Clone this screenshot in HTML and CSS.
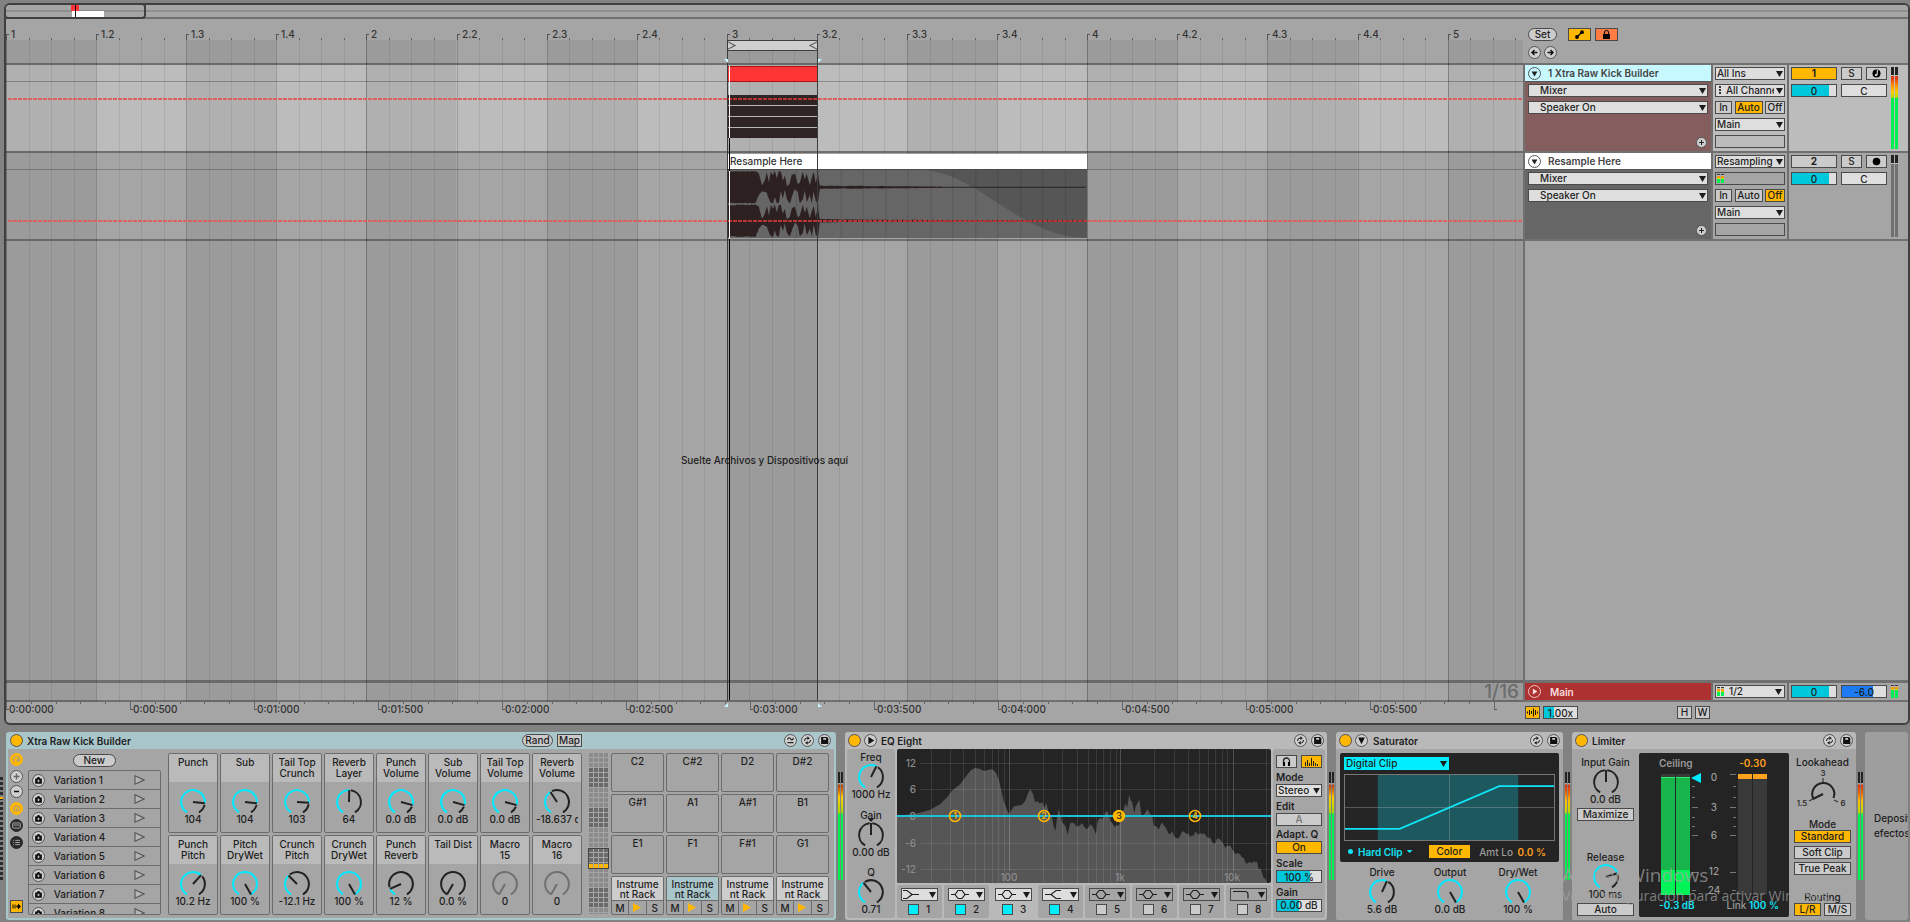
FILE: index.html
```html
<!DOCTYPE html>
<html lang="es">
<head>
<meta charset="utf-8">
<title>Xtra Raw Kick Builder</title>
<link rel="stylesheet" href="styles.css">
</head>
<body>
<svg class="defs" aria-hidden="true">
  <symbol id="i-swap" viewBox="0 0 13 13"><path d="M3 7.2C3 4.7 5 3.2 7 3.6M10 5.8C10 8.3 8 9.8 6 9.4" fill="none" stroke="#222" stroke-width="1.3"/><path d="M6.4 1.4L9.400 3.900 6.2 6zM6.6 11.600L3.600 9.100 6.8 7z" fill="#222"/></symbol>
  <symbol id="i-save" viewBox="0 0 13 13"><path d="M2.500 2.500h7l1.500 1.500v6.500H2.500z" fill="#111"/><path d="M5 3.4h3.4v2.2H5z" fill="#cfcfcf"/></symbol>
  <symbol id="i-wave" viewBox="0 0 13 13"><path d="M3 5.500C3.500 3 5.500 2.500 6.500 4.500S9.500 6 10 3.500" fill="none" stroke="#222" stroke-width="1.400"/><path d="M3 9h7" stroke="#222" stroke-width="1.400"/></symbol>
  <symbol id="i-cam" viewBox="0 0 13 13"><path d="M2.500 4h2.200L5.500 2.500h2L8.300 4h2.200v6.300h-8z" fill="#111"/><path d="M6.500 5.500v3M5 7h3" stroke="#ccc" stroke-width="1"/></symbol>
  <symbol id="i-tri" viewBox="0 0 13 13"><path d="M3 4h7L6.500 10z" fill="currentColor"/></symbol>
  <symbol id="i-bigtri" viewBox="0 0 13 13"><path d="M2.500 3h8L6.500 11z" fill="#111"/></symbol>
  <symbol id="i-play" viewBox="0 0 13 13"><path d="M4.500 3l5.500 3.500-5.500 3.500z" fill="currentColor"/></symbol>
  <symbol id="i-bigplay" viewBox="0 0 13 13"><path d="M4 2l7 4.500L4 11z" fill="#111"/></symbol>
  <symbol id="i-plus" viewBox="0 0 13 13"><path d="M6.500 3v7M3 6.500h7" stroke="currentColor" stroke-width="1.600"/></symbol>
  <symbol id="i-bell" viewBox="0 0 33 11"><path d="M1 5.500h4M15 5.500h4M5 5.500l3-4h4l3 4-3 4H8z" fill="none" stroke="currentColor" stroke-width="1.200"/></symbol>
  <symbol id="i-lowshelf" viewBox="0 0 33 11"><path d="M0 1.500h4l5 4h7M0 9.500h4l5-4" fill="none" stroke="currentColor" stroke-width="1.200"/></symbol>
  <symbol id="i-hishelf" viewBox="0 0 33 11"><path d="M1 5.500h6l5-4h5M7 5.500l5 4h5" fill="none" stroke="currentColor" stroke-width="1.200"/></symbol>
  <symbol id="i-cut" viewBox="0 0 33 11"><path d="M1 2.500h12q3 0 3 3v4" fill="none" stroke="currentColor" stroke-width="1.200"/></symbol>
</svg>

<main class="arrangement">
  <div class="overview">
    <span class="ov-red"></span><span class="ov-white"></span><span class="ov-box"></span><span class="ov-head"></span>
  </div>
  <div class="arr-body">
    <section class="timeline" id="timeline">
      <svg class="grid" id="grid" aria-hidden="true"></svg>
      <div class="ruler" id="ruler"></div>
      <div class="scrub"></div>
      <div class="lane lane-1"><span class="auto auto-1"></span></div>
      <div class="lane lane-2"><span class="auto auto-2"></span></div>
      <div class="lane lane-empty"><p>Suelte Archivos y Dispositivos aquí</p></div>
      <div class="lane lane-main"><span class="fixed-grid">1/16</span></div>
      <div class="time-ruler" id="timeRuler"></div>

      <div class="brace"><svg viewBox="0 0 90 11" preserveAspectRatio="none"><path d="M1 1l7 4.500-7 4.500M89 1l-7 4.500 7 4.500" fill="none" stroke="#555" stroke-width="1.200"/></svg></div>
      <div class="clip clip-midi">
        <div class="clip-bar"></div>
        <div class="notes"><i></i><i></i><i></i><i></i></div>
      </div>
      <div class="clip clip-audio">
        <div class="clip-name">Resample Here</div>
        <svg class="wave" id="wave" viewBox="0 0 360 69" preserveAspectRatio="none"></svg>
      </div>
      <span class="auto over-1"></span><span class="auto over-2"></span>
      <span class="vline v-start"></span><span class="vline v-end"></span><span class="vline v-play"></span>
      <span class="white-head w1"></span><span class="white-head w2"></span>
      <span class="mark m1"></span><span class="mark m2"></span><span class="mark m3"></span><span class="mark m4"></span>
    </section>

    <section class="mixer">
      <div class="mix-top">
        <div class="row"><button class="btn pill set">Set</button>
          <button class="btn on icon23" aria-label="Automation"><svg viewBox="0 0 21 11"><path d="M8 8l5-5" stroke="#111" stroke-width="1.500"/><circle cx="8" cy="8" r="1.900"/><circle cx="13" cy="3.200" r="1.900"/></svg></button>
          <button class="btn lock icon23" aria-label="Lock envelopes"><svg viewBox="0 0 21 11"><path d="M7 5h7v5H7z"/><path d="M8.500 5V3.500a2 2 0 0 1 4 0V5" fill="none" stroke="#111" stroke-width="1.200"/></svg></button></div>
        <div class="row arrows"><button class="round" aria-label="Previous"><svg viewBox="0 0 13 13"><path d="M3 6.500h7M6.500 3.500l-3 3 3 3" fill="none" stroke="#111" stroke-width="1.700"/></svg></button><button class="round" aria-label="Next"><svg viewBox="0 0 13 13"><path d="M3 6.500h7M6.500 3.500l3 3-3 3" fill="none" stroke="#111" stroke-width="1.700"/></svg></button></div>
      </div>
      <div class="track t1">
        <div class="head">
          <div class="name"><button class="round clear" aria-label="Fold"><svg><use href="#i-tri"/></svg></button><span>1 Xtra Raw Kick Builder</span></div>
          <label class="sel wide"><select aria-label="Device"><option>Mixer</option></select></label>
          <label class="sel wide"><select aria-label="Parameter"><option>Speaker On</option></select></label>
          <button class="round small add" aria-label="Add lane"><svg><use href="#i-plus"/></svg></button>
        </div>
        <div class="io">
          <label class="sel"><select aria-label="Input"><option>All Ins</option></select></label>
          <label class="sel chan"><select aria-label="Channel"><option>All Channels</option></select></label>
          <div class="mon"><button class="btn">In</button><button class="btn on">Auto</button><button class="btn">Off</button></div>
          <label class="sel"><select aria-label="Output"><option>Main</option></select></label>
          <span class="blank"></span>
        </div>
        <div class="mix">
          <div class="ctl"><button class="btn on strong">1</button><button class="btn">S</button><button class="btn" aria-label="Arm"><svg viewBox="0 0 13 11"><circle cx="6.500" cy="5.500" r="4"/><path d="M7.500 2l-.5 5.500" stroke="#ccc" stroke-width="1.200"/><circle cx="6" cy="7" r="1.200" fill="#ccc"/></svg></button>
            <input class="num" style="--fill:84%" value="0" aria-label="Volume"><input class="num pan" value="C" aria-label="Pan"></div>
          <div class="meter"><i></i><i></i></div>
        </div>
      </div>
      <div class="track t2">
        <div class="head">
          <div class="name"><button class="round clear" aria-label="Fold"><svg><use href="#i-tri"/></svg></button><span>Resample Here</span></div>
          <label class="sel wide"><select aria-label="Device"><option>Mixer</option></select></label>
          <label class="sel wide"><select aria-label="Parameter"><option>Speaker On</option></select></label>
          <button class="round small add" aria-label="Add lane"><svg><use href="#i-plus"/></svg></button>
        </div>
        <div class="io">
          <label class="sel"><select aria-label="Input"><option>Resampling</option></select></label>
          <span class="blank"><b class="mini"></b><b class="mini"></b></span>
          <div class="mon"><button class="btn">In</button><button class="btn">Auto</button><button class="btn on">Off</button></div>
          <label class="sel"><select aria-label="Output"><option>Main</option></select></label>
          <span class="blank"></span>
        </div>
        <div class="mix">
          <div class="ctl"><button class="btn strong">2</button><button class="btn">S</button><button class="btn" aria-label="Arm"><svg viewBox="0 0 13 11"><circle cx="6.500" cy="5.500" r="3.800"/></svg></button>
            <input class="num" style="--fill:84%" value="0" aria-label="Volume"><input class="num pan" value="C" aria-label="Pan"></div>
          <div class="meter idle"><i></i><i></i></div>
        </div>
      </div>
      <div class="mix-space"></div>
      <div class="main-track">
        <div class="head"><button class="round ghost" aria-label="Main"><svg><use href="#i-play"/></svg></button><span>Main</span></div>
        <div class="io"><label class="sel out"><b class="mini"></b><b class="mini"></b><select aria-label="Output"><option>1/2</option></select></label></div>
        <div class="mix"><div class="ctl"><input class="num" style="--fill:84%" value="0" aria-label="Volume"><input class="num cue" style="--fill:70%" value="-6.0" aria-label="Cue"></div><div class="tiny"><b class="mini"></b><b class="mini"></b></div></div>
      </div>
      <div class="mix-foot">
        <button class="btn on sq" aria-label="Warp"><svg viewBox="0 0 13 11"><path d="M1.500 4.500v2M3.500 3v5M5.500 4v3M7.500 1.500v8M9.500 3v5M11.500 4.500v2" stroke="#111"/></svg></button>
        <input class="num zoom" style="--fill:30%" value="1.00x" aria-label="Zoom">
        <button class="btn sq push">H</button><button class="btn sq">W</button>
      </div>
    </section>
  </div>
</main>

<section class="devices">
  <span class="chain-dots"></span>

  <article class="device rack">
    <header><button class="round power" aria-label="On"></button><h2>Xtra Raw Kick Builder</h2>
      <div class="rackbtns"><button class="btn pill">Rand</button><button class="btn">Map</button></div>
      <span class="tools"><button class="round" aria-label="Variations"><svg><use href="#i-wave"/></svg></button><button class="round" aria-label="Swap"><svg><use href="#i-swap"/></svg></button><button class="round" aria-label="Save"><svg><use href="#i-save"/></svg></button></span></header>
    <div class="body">
      <nav class="side">
        <button class="round dot-y" aria-label="Macros"><svg viewBox="0 0 13 13"><path d="M4 9.500a4 4 0 1 1 5 0M6.500 6.500a1.500 1.500 0 1 1 0 1" fill="none" stroke="#b5a070" stroke-width="1.400"/></svg></button>
        <button class="round g1" aria-label="Add"><svg class="dim"><use href="#i-plus"/></svg></button>
        <button class="round g2" aria-label="Remove"><svg viewBox="0 0 13 13"><path d="M3.500 6.500h6" stroke="#111" stroke-width="1.600"/></svg></button>
        <button class="round dot-y" aria-label="Snapshots"><svg viewBox="0 0 13 13"><path d="M3 4.500h2l.7-1.300h1.600L8 4.500h2v5H3zM6.500 5.500v3M5 7h3" fill="none" stroke="#b5a070" stroke-width="1.200"/></svg></button>
        <button class="round dot-k" aria-label="Devices"><svg viewBox="0 0 13 13"><rect x="2" y="3.500" width="9" height="6" rx="1" fill="none" stroke="#bbb"/><path d="M3 6h7" stroke="#bbb"/></svg></button>
        <button class="round dot-k" aria-label="Chains"><svg viewBox="0 0 13 13"><path d="M5 4h5.500M5 6.500h5.500M5 9h5.500M2.500 4h1M2.500 6.500h1M2.500 9h1" stroke="#bbb"/></svg></button>
        <button class="btn on sq last" aria-label="Hot swap"><svg viewBox="0 0 11 11"><path d="M2 3.500v4M4 3.500v4" stroke="#111"/><path d="M5.500 4.500H7V2.500l3 3-3 3v-2H5.500z"/></svg></button>
      </nav>
      <div class="vars"><button class="btn pill new">New</button><ul id="vars"></ul></div>
      <div class="macros" id="macros"></div>
      <div class="padmap"><i></i></div>
      <div class="pads" id="pads"></div>
    </div>
  </article>
  <div class="chain-meter"><i></i><i></i></div>

  <article class="device eq">
    <header><button class="round power" aria-label="On"></button><button class="round" aria-label="Expand"><svg><use href="#i-bigplay"/></svg></button><h2>EQ Eight</h2>
      <span class="tools"><button class="round" aria-label="Swap"><svg><use href="#i-swap"/></svg></button><button class="round" aria-label="Save"><svg><use href="#i-save"/></svg></button></span></header>
    <div class="body">
      <div class="panel eqk">
        <div class="kg" data-label="Freq" data-v="0.59" data-val="1000 Hz"></div>
        <div class="kg" data-label="Gain" data-v="0.5" data-kind="bip" data-val="0.00 dB"></div>
        <div class="kg" data-label="Q" data-v="0.37" data-val="0.71"></div>
      </div>
      <div class="eqc">
        <svg class="eqgraph" id="eqgraph" viewBox="0 0 374 134"></svg>
        <div class="bands" id="bands"></div>
      </div>
      <div class="panel eqr">
        <div class="pair"><button class="btn" aria-label="Audition"><svg viewBox="0 0 19 11"><path d="M6.500 8.500V5a3 3 0 0 1 6 0v3.500" fill="none" stroke="#222" stroke-width="1.300"/><path d="M6 6h2v4H6zM11 6h2v4h-2z"/></svg></button><button class="btn on" aria-label="Analyze"><svg viewBox="0 0 19 11"><path d="M3.500 6v4M5.500 4v6M7.500 7v3M9.500 2v8M11.500 5v5M13.500 7v3M15.500 8v2" stroke="#222"/></svg></button></div>
        <label><span>Mode</span><span class="sel"><select><option>Stereo</option></select></span></label>
        <div class="f"><span>Edit</span><button class="btn dimt">A</button></div>
        <div class="f"><span>Adapt. Q</span><button class="btn on">On</button></div>
        <label><span>Scale</span><input class="num" style="--fill:74%" value="100 %"></label>
        <label><span>Gain</span><input class="num" style="--fill:50%" value="0.00 dB"></label>
      </div>
    </div>
  </article>
  <div class="chain-meter"><i></i><i></i></div>

  <article class="device sat">
    <header><button class="round power" aria-label="On"></button><button class="round" aria-label="Fold"><svg><use href="#i-bigtri"/></svg></button><h2>Saturator</h2>
      <span class="tools"><button class="round" aria-label="Swap"><svg><use href="#i-swap"/></svg></button><button class="round" aria-label="Save"><svg><use href="#i-save"/></svg></button></span></header>
    <div class="body">
      <div class="dark">
        <label class="sel cy"><select aria-label="Curve"><option>Digital Clip</option></select></label>
        <svg class="shaper" viewBox="0 0 210 67" preserveAspectRatio="none"><rect x="33" width="141" height="67" fill="#1c585e"/><path d="M105 0v67M0 33.500h210" stroke="#9aa" stroke-opacity=".4"/><path d="M0 55.500h55L155 11.500h55" fill="none" stroke="#10e4f6" stroke-width="1.800"/></svg>
        <div class="satrow"><span class="hard"><i></i>Hard Clip<small></small></span><button class="color">Color</button><span class="amt">Amt Lo <b>0.0 %</b></span></div>
      </div>
      <div class="satk"><div class="kg" data-label="Drive" data-v="0.58" data-val="5.6 dB"></div><div class="kg" data-label="Output" data-v="1" data-val="0.0 dB"></div><div class="kg" data-label="Dry/Wet" data-v="1" data-val="100 %"></div></div>
    </div>
  </article>
  <div class="chain-meter full"><i></i><i></i></div>

  <article class="device lim">
    <header><button class="round power" aria-label="On"></button><h2>Limiter</h2>
      <span class="tools"><button class="round" aria-label="Swap"><svg><use href="#i-swap"/></svg></button><button class="round" aria-label="Save"><svg><use href="#i-save"/></svg></button></span></header>
    <div class="body">
      <div class="liml"><div class="kg" data-label="Input Gain" data-v="0.5" data-kind="plain" data-val="0.0 dB"></div><button class="btn">Maximize</button>
        <div class="kg rel" data-label="Release" data-v="0.74" data-val="100 ms"></div><button class="btn">Auto</button></div>
      <div class="dark limd">
        <div class="limt"><span>Ceiling</span><b>-0.30</b></div>
        <svg class="limg" id="limg" viewBox="0 0 150 122"></svg>
        <div class="limb"><b>-0.3 dB</b><span>Link <b>100 %</b></span></div>
      </div>
      <div class="limr">
        <span>Lookahead</span>
        <svg class="look" viewBox="0 0 54 42"><text x="27" y="8">3</text><text x="6" y="38">1.5</text><text x="47" y="38">6</text><path d="M27 10v4M13 33l4-2M38 32l4 2" stroke="#333" stroke-width="1.200"/><path d="M17.500 31A11 11 0 1 1 37.500 30M27 26l-10 5" fill="none" stroke="#222" stroke-width="2"/></svg>
        <span class="gapt">Mode</span><button class="btn on">Standard</button><button class="btn">Soft Clip</button><button class="btn">True Peak</button>
        <span class="push">Routing</span><div class="pair"><button class="btn on">L/R</button><button class="btn">M/S</button></div>
      </div>
    </div>
  </article>
  <div class="chain-meter full"><i></i><i></i></div>
  <div class="drop">Depositar efectos</div>
  <p class="notice"><span>Activar Windows</span>Ve a Configuración para activar Windows.</p>
</section>
<script src="app.js"></script>
</body>
</html>
```
FILE: styles.css
```css
* { box-sizing: border-box; }
body { margin: 0; height: 100vh; display: flex; flex-direction: column; padding-top: 3px; padding-bottom: 2px; overflow: hidden;
  background: #828282; color: #1e1e1e; font: 500 10px/12px Inter, "Noto Sans", sans-serif; }
button, input, select { font: inherit; color: inherit; margin: 0; }
p, h2, ul { margin: 0; padding: 0; }
.defs { position: absolute; width: 0; height: 0; }

/* shared controls */
.btn { height: 13px; border: 1px solid #4a4a4a; background: #cbcbcb; padding: 0; line-height: 11px; display: flex; justify-content: center; align-items: center; white-space: nowrap; overflow: hidden; }
.btn svg { display: block; height: 11px; width: 100%; }
.btn.on { background: #ffb700; }
.btn.lock { background: #ff7d45; }
.pill { border-radius: 7px; }
.strong { font-weight: 700; }
.dimt { color: #777; }
.round { width: 13px; height: 13px; padding: 0; border: 1px solid #555; border-radius: 50%; background: #cfcfcf; color: #222; flex: none; display: flex; }
.round svg { width: 11px; height: 11px; display: block; }
.round.small { width: 11px; height: 11px; }
.round.small svg { width: 9px; height: 9px; }
.round.power { background: #ffb700; }
.round.clear { background: transparent; }
.round.ghost { background: transparent; border-color: #f0c8c8; color: #f6dcdc; }
.sel { position: relative; display: block; height: 13px; }
.sel::after { content: ""; position: absolute; right: 2px; top: 4px; width: 7px; height: 6px; background: #1a1a1a; clip-path: polygon(0 0, 100% 0, 50% 100%); pointer-events: none; }
.sel select { appearance: none; display: block; width: 100%; height: 13px; border: 1px solid #4a4a4a; border-radius: 0; background: #dedede; padding: 0 10px 0 1px; line-height: 11px; }
.num { height: 13px; width: 46px; border: 1px solid #4a4a4a; border-radius: 0; padding: 0; text-align: center; line-height: 11px;
  background: linear-gradient(90deg, #00c8dc var(--fill, 0%), #dedede var(--fill, 0%)); }
.num.cue { background: linear-gradient(90deg, #1c7bf2 var(--fill), #dedede var(--fill)); }
.num.pan { background: #dedede; }
.row { display: flex; }
.mini { display: inline-block; width: 3px; height: 100%; margin-right: 1px; background: linear-gradient(#333 0 1px, #bbb 1px 2px, #f90 2px 4px, #dd0 4px 5px, #0e5 5px); }

/* arrangement frame */
.arrangement { flex: 1; margin-left: 4px; border: 2px solid #3f3f3f; border-radius: 6px; background: #a5a5a5; display: flex; flex-direction: column; min-height: 0; overflow: hidden; }
.overview { position: relative; height: 14px; flex: none; border-bottom: 2px solid #707070; background: linear-gradient(#a5a5a5 0 5px, #8e8e8e 5px 7px, #a5a5a5 7px); }
.overview span { position: absolute; }
.ov-red { left: 65px; top: 0; width: 8px; height: 6px; background: #f33; }
.ov-white { left: 66px; top: 6px; width: 32px; height: 6px; background: #fff; }
.ov-box { left: -2px; top: -2px; width: 142px; height: 16px; border: 2px solid #3f3f3f; border-radius: 4px; }
.ov-head { left: 69px; top: 0; width: 1px; height: 12px; background: #111; }
.arr-body { flex: 1; display: flex; min-height: 0; }

/* timeline */
.timeline { position: relative; flex: 1; display: flex; flex-direction: column; overflow: hidden; }
.grid { position: absolute; left: 0; top: 21px; width: 100%; height: calc(100% - 42px); z-index: 1; pointer-events: none; }
.ruler { position: relative; height: 21px; font-size: 10px; color: #333; flex: none; }
.ruler span { position: absolute; bottom: 0; height: 6px; border-left: 1px solid #555; }
.ruler span.major { border-top: 1px solid #555; width: 3px; }
.ruler span.minor { height: 2px; border-color: #666; }
.ruler em { position: absolute; top: 9px; font-style: normal; }
.scrub { height: 25px; border-bottom: 2px solid #707070; flex: none; }
.lane { position: relative; border-bottom: 2px solid #707070; flex: none; }
.lane-1, .lane-2 { height: 88px; }
.lane-1 { background: linear-gradient(#bcbcbc 0 16px, #8b8b8b 16px 17px, #bcbcbc 17px); }
.lane-2 { background: linear-gradient(#a5a5a5 0 16px, #808080 16px 17px, #a5a5a5 17px); }
.lane-empty { flex: 1; border-bottom-width: 3px; display: flex; align-items: center; justify-content: center; padding-bottom: 2px; }
.lane-empty p { z-index: 5; }
.lane-main { height: 19px; }
.fixed-grid { position: absolute; right: 4px; top: 0; font-size: 19px; line-height: 17px; color: #6c6c6c; z-index: 2; }
.time-ruler { position: relative; height: 21px; flex: none; color: #333; }
.time-ruler span { position: absolute; top: 0; height: 2px; border-left: 1px solid #666; }
.time-ruler span.major { height: 8px; width: 3px; border-bottom: 1px solid #555; }
.time-ruler em { position: absolute; top: 1px; font-style: normal; }
.auto { position: absolute; left: 2px; right: 0; height: 2px; z-index: 2; background: repeating-linear-gradient(90deg, #dc6060 0 4px, transparent 4px 5px); }
.auto-1 { top: 33px; }
.auto-2 { top: 67px; }
.over-1, .over-2 { z-index: 4; left: 722px; right: auto; background: repeating-linear-gradient(90deg, #b93236 0 4px, transparent 4px 5px); }
.over-1 { top: 79px; width: 90px; }
.over-2 { top: 201px; width: 360px; }
.brace { position: absolute; left: 721px; top: 21px; width: 91px; height: 11px; background: #cfcfcf; border-top: 1px solid #3f3f3f; border-bottom: 1px solid #3f3f3f; z-index: 3; }
.brace svg { display: block; width: 100%; height: 9px; }
.clip { position: absolute; left: 722px; z-index: 3; }
.clip-midi { top: 47px; width: 90px; }
.clip-bar { height: 16px; background: #ff3434; border-top: 1px solid #a11; border-bottom: 1px solid #a11; }
.notes { display: grid; gap: 1px; margin-top: 13px; background: #b5b5b5; }
.notes i { height: 10px; background: #2f2424; }
.clip-audio { top: 135px; width: 359px; }
.clip-name { background: #fff; height: 15px; padding-left: 2px; line-height: 15px; color: #333; }
.wave { display: block; width: 100%; height: 69px; border-top: 1px solid #4a4a4a; }
.vline { position: absolute; top: 21px; bottom: 23px; width: 1px; background: #3a3a3a; z-index: 4; }
.v-start { left: 721px; }
.v-end { left: 811px; }
.v-play { left: 723px; top: 47px; background: #000; }
.white-head { position: absolute; left: 723px; width: 1px; background: #fff; z-index: 5; }
.w1 { top: 47px; height: 72px; }
.w2 { top: 152px; height: 68px; }
.mark { position: absolute; width: 4px; height: 4px; background: #c8f8ff; z-index: 4; }
.m1 { left: 718px; top: 40px; clip-path: polygon(0 0, 100% 0, 100% 100%); }
.m2 { left: 812px; top: 40px; clip-path: polygon(0 0, 100% 0, 0 100%); }
.m3 { left: 718px; bottom: 16px; clip-path: polygon(100% 0, 100% 100%, 0 100%); }
.m4 { left: 812px; bottom: 16px; clip-path: polygon(0 0, 100% 100%, 0 100%); }

/* mixer column */
.mixer { width: 385px; flex: none; display: flex; flex-direction: column; }
.mix-top { height: 46px; flex: none; padding: 9px 0 0 5px; border-bottom: 2px solid #707070; }
.set { width: 29px; margin-right: 11px; }
.icon23 { width: 23px; margin-right: 4px; }
.arrows { margin-top: 5px; gap: 3px; }
.track { display: flex; height: 88px; flex: none; border-bottom: 2px solid #707070; border-left: 2px solid #707070; }
.head { width: 186px; position: relative; flex: none; }
.name { height: 17px; margin-bottom: 2px; border-bottom: 1px solid #555; display: flex; align-items: center; gap: 7px; padding-left: 3px; font-weight: 600; color: #444; }
.t1 .head { background: #845e5e; }
.t1 .name { background: #c8f8ff; }
.t1 { background: #bcbcbc; }
.t2 .head { background: #666; }
.t2 .name { background: #fff; }
.sel.wide { margin: 0 3px 4px; }
.sel.wide select { padding-left: 11px; }
.add { position: absolute; right: 4px; bottom: 3px; }
.io { width: 78px; border-left: 2px solid #707070; border-right: 2px solid #707070; padding: 2px; display: flex; flex-direction: column; gap: 4px; flex: none; }
.chan select { padding-left: 10px; }
.chan::before { content: ""; position: absolute; left: 4px; top: 2px; width: 2px; height: 9px; background: repeating-linear-gradient(#333 0 2px, transparent 2px 3px); }
.mon { display: flex; justify-content: space-between; }
.mon .btn:nth-child(1) { width: 17px; }
.mon .btn:nth-child(2) { width: 28px; }
.mon .btn:nth-child(3) { width: 20px; }
.blank { height: 13px; border: 1px solid #4a4a4a; padding: 1px; display: flex; }
.mix { flex: 1; display: flex; justify-content: space-between; padding: 2px 10px 2px 2px; }
.ctl { display: flex; flex-wrap: wrap; width: 96px; gap: 4px; align-content: flex-start; }
.ctl .btn { width: 21px; }
.ctl .strong { width: 46px; }
.meter { display: flex; gap: 1px; }
.meter i { width: 3px; background: linear-gradient(#222 0 8px, #bbb 8px 9px, #e03c10 9px 12px, #ff8c00 18px, #ffd000 25px, #a0e000 31px, #00f050 31px); }
.meter.idle i { background: linear-gradient(#222 0 8px, #bbb 8px 9px, #707070 9px); }
.mix-space { flex: 1; border-left: 2px solid #707070; }
.main-track { height: 22px; flex: none; display: flex; border: solid #707070; border-width: 3px 0 2px 2px; }
.main-track .head { background: #ad3131; color: #f6dcdc; font-weight: 600; display: flex; align-items: center; gap: 9px; padding-left: 3px; }
.sel.out { display: flex; align-items: stretch; background: #dedede; border: 1px solid #4a4a4a; padding: 1px 0 1px 1px; }
.sel.out .mini { flex: none; }
.sel.out select { border: 0; height: 9px; line-height: 9px; padding-left: 4px; background: none; }
.main-track .sel::after { top: 3px; }
.tiny { display: flex; height: 13px; }
.main-track .mix { padding-right: 9px; }
.mix-foot { height: 21px; flex: none; display: flex; gap: 3px; padding: 4px 198px 0 2px; }
.sq { width: 15px; flex: none; }
.zoom { width: 35px; }
.push { margin-left: auto; }

/* device chain */
.devices { position: relative; flex: none; display: flex; gap: 2px; margin-top: 7px; padding-right: 2px; }
.chain-dots { width: 3px; margin: 45px 1px 40px 0; background: linear-gradient(transparent 20px, #ffb700 20px 22px, transparent 22px), repeating-linear-gradient(#2c2c2c 0 3px, transparent 3px 5px); }
.device { display: flex; flex-direction: column; background: #b9b9b9; border-radius: 3px; flex: none; overflow: hidden; }
.device header { height: 17px; display: flex; align-items: center; gap: 3px; padding: 0 3px; }
.device h2 { font-size: 10px; font-weight: 600; margin-left: 1px; white-space: nowrap; }
.tools { margin-left: auto; display: flex; gap: 4px; }
.device .body { display: flex; flex: 1; }
.rack { width: 830px; background: #a9c6cb; }
.rack header { padding: 0 5px 0 4px; position: relative; }
.rackbtns { display: flex; gap: 4px; position: absolute; left: 516px; top: 2px; }
.rackbtns .btn { width: 31px; }
.rackbtns .btn + .btn { width: 25px; }
.rack .body { background: #a5a5a5; margin: 0 2px 2px; padding: 4px 5px 3px 2px; border-radius: 0 0 2px 2px; }
.side { width: 18px; display: flex; flex-direction: column; gap: 4px; }
.side .g1 { margin-bottom: -2px; }
.side .dot-y { background: #ffb700; border-color: #ffb700; }
.side .dot-k { background: #2a2a2a; border-color: #2a2a2a; }
.side .last { width: 13px; margin-top: auto; margin-bottom: 2px; }
.dim { opacity: .6; }
.vars { width: 135px; height: 162px; overflow: hidden; margin-right: 7px; }
.new { width: 43px; margin: 1px 0 3px 45px; }
.vars ul { list-style: none; height: 145px; border: 1px solid #6c6c6c; border-radius: 2px; overflow: hidden; }
.vars li { height: 19px; display: flex; align-items: center; padding-left: 3px; border-bottom: 1px solid #6c6c6c; }
.vars li span { margin-left: 9px; flex: 1; }
.vars li .go { border: 0; background: none; padding: 0; width: 11px; height: 10px; margin-right: 15px; }
.vars .go svg { display: block; width: 11px; height: 10px; }
.macros { display: grid; grid-template-columns: repeat(8, 50px); gap: 2px; margin-right: 7px; }
.macro { height: 80px; border: 1px solid #6c6c6c; border-radius: 2px; text-align: center; overflow: hidden; }
.macro h3 { margin: 0 0 7px; height: 28px; padding: 3px 2px 0; background: #bababa; font-size: 10px; line-height: 11px; font-weight: 500; }
.macro.narrow h3 { padding: 3px 6px 0; }
.macro output { display: block; white-space: nowrap; overflow: hidden; margin: 0 3px; line-height: 12px; }
.knob { position: relative; display: block; width: 28px; height: 24px; margin: 0 auto; }
.knob svg { display: block; width: 28px; height: 25px; }
.knob input { position: absolute; inset: 0; width: 100%; height: 100%; opacity: 0; }
.padmap { position: relative; width: 20px; height: 161px; margin-right: 2px; flex: none;
  background: repeating-linear-gradient(90deg, transparent 0 4px, #a5a5a5 4px 5px), repeating-linear-gradient(transparent 0 4px, #a5a5a5 4px 5px), repeating-linear-gradient(#8b8b8b 0 15px, #6a6a6a 15px 35px, #8b8b8b 35px 40px); }
.padmap i { position: absolute; left: -1px; top: 95px; width: 21px; height: 21px; border: 1px solid #444; background: repeating-linear-gradient(90deg, transparent 0 4px, #a5a5a5 4px 5px), linear-gradient(transparent 15px, #ffb700 15px); }
.pads { display: grid; grid-template-columns: repeat(4, 53px); gap: 2px; }
.pad { height: 39px; border: 1px solid #6c6c6c; border-radius: 2px; text-align: center; padding-top: 1px; line-height: 12px; overflow: hidden; }
.pad.full { padding: 0; display: flex; flex-direction: column; }
.pad .t { height: 24px; background: #cdcdcd; line-height: 10px; padding-top: 2px; border-bottom: 1px solid #6c6c6c; }
.pad.sel-pad .t { background: #a9c6cb; }
.pad .b { display: flex; flex: 1; }
.pad button { flex: 1; border: 0; background: none; padding: 0; line-height: 12px; }
.pad button + button { border-left: 1px solid #6c6c6c; }
.pad button svg { display: block; margin: auto; width: 8px; height: 9px; fill: #ffb700; }
.chain-meter { display: flex; gap: 1px; margin: 40px 0; width: 5px; flex: none; }
.chain-meter i { flex: 1; background: linear-gradient(#222 0 11px, #aaa 11px 12px, #b04010 13px, #e08000 20px, #ffd000 25px, #a0d800 41px, #00f050 42px); }
.chain-meter.full i { background: linear-gradient(#222 0 11px, #aaa 11px 12px, #d83010 13px, #f07000 22px, #ffc000 29px, #b0dc00 41px, #00f050 42px); }
.panel { background: #a5a5a5; border-radius: 3px; }
.kg { display: flex; flex-direction: column; align-items: center; text-align: center; white-space: nowrap; }
.kg .knob { margin-top: 1px; }
.eq { width: 482px; }
.eq .body { padding: 0 2px 2px; gap: 2px; }
.eqk { width: 48px; padding: 2px 0 3px; display: flex; flex-direction: column; justify-content: space-between; }
.eqc { flex: 1; display: flex; flex-direction: column; gap: 2px; }
.eqgraph { display: block; width: 100%; height: 134px; background: #242424; border-radius: 2px; }
.eqgraph text { font: 500 10px Inter, sans-serif; fill: #8b8b8b; }
.bands { display: grid; grid-template-columns: repeat(8, 1fr); gap: 2px; flex: 1; }
.band { background: #a5a5a5; border-radius: 2px; padding: 3px 4px; }
.band.cur { background: none; }
.band .sel svg { position: absolute; left: 2px; top: 1px; width: 33px; height: 11px; pointer-events: none; }
.band.off select { background: #a5a5a5; }
.band .c { display: flex; align-items: center; gap: 7px; margin: 2px 0 0 7px; }
.band input { appearance: none; width: 11px; height: 11px; margin: 0; border: 1px solid #4a4a4a; background: #cbcbcb; }
.band input:checked { background: #00eeff; }
.eqr { width: 52px; padding: 6px 3px; display: flex; flex-direction: column; justify-content: space-between; font-weight: 500; }
.pair { display: flex; justify-content: space-between; }
.eqr .pair .btn { width: 21px; }
.eqr label, .eqr .f { display: block; }
.eqr label > span:first-child, .f > span { display: block; font-weight: 600; line-height: 14px; }
.eqr .f .btn, .eqr .num { width: 100%; display: block; }
.sat { width: 227px; }
.sat h2 { margin-left: 2px; }
.sat .body { background: #a5a5a5; flex-direction: column; padding: 4px; }
.dark { background: #242424; border-radius: 2px; }
.sat .dark { padding: 4px; height: 109px; }
.cy { width: 105px; }
.cy select { background: #00eeff; border-color: #00eeff; }
.shaper { display: block; width: 100%; height: 67px; margin: 4px 0; border: 1px solid #777; }
.satrow { display: flex; align-items: center; justify-content: space-between; padding: 0 9px 0 4px; }
.hard { color: #10e4f6; font-weight: 600; display: flex; align-items: center; }
.hard i { width: 5px; height: 5px; border-radius: 50%; background: currentColor; margin-right: 5px; }
.hard small { width: 6px; height: 3px; background: currentColor; clip-path: polygon(0 0, 100% 0, 50% 100%); margin-left: 4px; }
.color { border: 0; background: #ffb700; height: 13px; width: 41px; padding: 0; line-height: 13px; margin-left: 7px; }
.amt { color: #9a9a9a; }
.amt b { color: #ff9e1c; font-weight: 600; margin-left: 2px; }
.satk { display: grid; grid-template-columns: repeat(3, 68px); margin: 4px auto 0 8px; }
.lim { width: 284px; }
.lim .body { background: #a5a5a5; padding: 4px 4px 3px 5px; }
.liml { width: 57px; display: flex; flex-direction: column; padding: 3px 0 1px; }
.liml .btn { width: 100%; margin-top: 3px; }
.liml .rel { margin-top: auto; }
.limd { width: 150px; margin: 0 5px; display: flex; flex-direction: column; }
.limt, .limb { display: flex; justify-content: space-between; padding: 4px 23px 0 20px; color: #9a9a9a; font-weight: 600; height: 20px; }
.limt b { color: #ff9e1c; font-weight: 600; }
.limb { padding: 4px 10px 0 20px; font-weight: 500; }
.limb b { color: #10e4f6; font-weight: 600; }
.limg { display: block; width: 150px; height: 122px; }
.limg text { font: 500 10px Inter, sans-serif; fill: #9a9a9a; text-anchor: middle; }
.limr { width: 57px; display: flex; flex-direction: column; text-align: center; padding: 3px 0 1px; }
.look { width: 54px; height: 42px; margin: 0 auto; display: block; overflow: visible; }
.look text { font: 500 8px Inter, sans-serif; text-anchor: middle; fill: #222; }
.gapt { margin-top: 8px; }
.limr .btn { margin-bottom: 3px; }
.limr > .push { margin: auto 0 0; }
.limr .pair .btn { width: 27px; margin-bottom: 0; }
.drop { flex: 1 1 0; min-width: 0; background: #9e9e9e; border-radius: 3px; padding: 79px 0 0 9px; line-height: 15px; overflow: hidden; }
.notice { position: absolute; left: 1562px; top: 131px; color: rgba(165, 165, 165, .7); font: 400 14px/18px "Open Sans", sans-serif; pointer-events: none; white-space: nowrap; }
.notice span { display: block; font-size: 19px; line-height: 24px; }
```
FILE: app.js
```js
const $ = id => document.getElementById(id);

// Knobs: sweep from -150 to 150 degrees
function pt(a, r, cx = 14, cy = 13) {
  const t = a * Math.PI / 180;
  return (cx + r * Math.sin(t)).toFixed(2) + ' ' + (cy - r * Math.cos(t)).toFixed(2);
}
function arc(a, b, r) {
  return `M${pt(a, r)}A${r} ${r} 0 ${b - a > 180 ? 1 : 0} 1 ${pt(b, r)}`;
}
function knob(v, kind, label) {
  const a = -150 + 300 * v, r = 11.9;
  const dark = kind === 'off' ? '#707070' : '#222';
  let s = '';
  if (kind === 'bip' || kind === 'plain') s += `<path d="${arc(-150, -6, r)}${arc(6, 150, r)}" stroke="${dark}"/>`;
  else {
    if (v > 0) s += `<path d="${arc(-150, a, r)}" stroke="#00eaff"/>`;
    if (v < 0.98) s += `<path d="${arc(v > 0 ? a + 8 : a, 150, r)}" stroke="${dark}"/>`;
  }
  s += `<path d="M14 13L${pt(a, 12)}" stroke="${dark}"/>`;
  if (kind === 'bip') s += '<path d="M10.500 -4h7l-3.500 4z" fill="#222"/>';
  return `<span class="knob"><svg viewBox="0 0 28 25" overflow="visible" fill="none" stroke-width="2">${s}</svg><input type="range" min="0" max="1" step="0.01" value="${v}" aria-label="${label}"></span>`;
}
document.querySelectorAll('.kg').forEach(k => {
  const d = k.dataset;
  k.innerHTML = `<span>${d.label}</span>${knob(+d.v, d.kind, d.label)}<output>${d.val}</output>`;
});

$('macros').innerHTML = [
  ['Punch', .82, '104'], ['Sub', .82, '104'], ['Tail Top Crunch', .81, '103'], ['Reverb Layer', .504, '64'],
  ['Punch Volume', .85, '0.0 dB'], ['Sub Volume', .85, '0.0 dB'], ['Tail Top Volume', .85, '0.0 dB'], ['Reverb Volume', .39, '-18.637 dB'],
  ['Punch Pitch', .64, '10.2 Hz'], ['Pitch DryWet', 1, '100 %'], ['Crunch Pitch', .35, '-12.1 Hz'], ['Crunch DryWet', 1, '100 %'],
  ['Punch Reverb', .12, '12 %'], ['Tail Dist', 0, '0.0 %'], ['Macro 15', 0, '0', 'off'], ['Macro 16', 0, '0', 'off']
].map(([n, v, t, k]) => `<div class="macro ${k ? 'narrow' : ''}"><h3>${n}</h3>${knob(v, k, n)}<output>${t}</output></div>`).join('');

$('vars').innerHTML = [1, 2, 3, 4, 5, 6, 7, 8].map(n =>
  `<li><button class="round" aria-label="Store"><svg><use href="#i-cam"/></svg></button><span>Variation ${n}</span><button class="go" aria-label="Recall"><svg viewBox="0 0 11 10"><path d="M1 .8l9 4.200-9 4.200z" fill="#b5b5b5" stroke="#555" stroke-width="1.100"/></svg></button></li>`).join('');

$('pads').innerHTML = ['C2', 'C#2', 'D2', 'D#2', 'G#1', 'A1', 'A#1', 'B1', 'E1', 'F1', 'F#1', 'G1']
  .map(n => `<div class="pad">${n}</div>`).join('') +
  [0, 1, 2, 3].map(i => `<div class="pad full ${i === 1 ? 'sel-pad' : ''}"><div class="t">Instrume<br>nt Rack</div><div class="b"><button>M</button><button aria-label="Play"><svg viewBox="0 0 8 9"><path d="M0 0l8 4.500-8 4.500z"/></svg></button><button>S</button></div></div>`).join('');

$('bands').innerHTML = ['lowshelf', 'bell', 'bell', 'hishelf', 'bell', 'bell', 'bell', 'cut'].map((t, i) =>
  `<div class="band ${i > 3 ? 'off' : ''} ${i === 2 ? 'cur' : ''}"><div class="sel"><select aria-label="Filter ${i + 1}"></select><svg><use href="#i-${t}"/></svg></div><label class="c"><input type="checkbox" ${i < 4 ? 'checked' : ''}>${i + 1}</label></div>`).join('');

// Beat grid
const BEAT = 90.1, BEATS = 17;
let g = '', r = '';
for (let k = 0; k < BEATS; k++) {
  const x = Math.round(k * BEAT);
  if (k % 2 === 0) g += `<rect x="${x}" width="${Math.round(BEAT)}" height="100%" fill="#000" fill-opacity=".06"/>`;
  for (let q = 0; q < 4; q++) {
    const lx = Math.round((k + q / 4) * BEAT);
    g += `<rect x="${lx}" width="1" height="100%" fill="#000" fill-opacity="${q ? .08 : k % 4 ? .16 : .26}"/>`;
    r += q ? `<span class="minor" style="left:${lx}px"></span>`
           : `<span class="major" style="left:${lx}px"></span><em style="left:${lx + 5}px">${1 + Math.floor(k / 4)}${k % 4 ? '.' + (k % 4 + 1) : ''}</em>`;
  }
}
$('grid').innerHTML = g;
$('ruler').innerHTML = r;

let tr = '';
for (let i = 0; i < 61; i++) {
  const x = Math.round(i * 24.8);
  tr += `<span class="${i % 5 ? '' : 'major'}" style="left:${x}px"></span>`;
  if (i % 5 === 0 && i < 60) {
    const h = i / 5;
    tr += `<em style="left:${x + 3}px">0:0${Math.floor(h / 2)}:${h % 2 ? '500' : '000'}</em>`;
  }
}
$('timeRuler').innerHTML = tr;

// Audio clip: two channels with a decaying tail and a fade-out
let seed = 7;
const rnd = () => (seed = (seed * 16807) % 2147483647) / 2147483647;
// Peaks of the attack, one key every few pixels: [x, up, down]
const KEYS = [[28,16,15],[31,14,8],[34,2,4],[37,7,5],[39,15,6],[41,5,12],[43,16,16],[45,12,16],[47,16,10],[49,9,16],[51,16,16],[53,16,4],[55,7,11],[57,12,3],[59,1,12],[62,4,16],[64,13,10],[67,14,2],[70,3,5],[72,5,16],[75,16,12],[77,8,3],[79,14,15],[82,2,8],[84,10,16],[86,15,4],[88,4,14],[90,14,16],[92,2,4],[94,2,2]];
function attack(x) {
  const i = KEYS.findIndex(k => k[0] > x), a = KEYS[i - 1], b = KEYS[i], t = (x - a[0]) / (b[0] - a[0]);
  return [a[1] + (b[1] - a[1]) * t, a[2] + (b[2] - a[2]) * t];
}
function channel(cy) {
  const up = [], dn = [];
  for (let x = 0; x <= 360; x += x < 92 ? 1 : 3) {
    let u, d;
    if (x < 28) { u = 15.5 + rnd(); d = u; }
    else if (x < 92) { [u, d] = attack(x); u = Math.max(1, u + rnd() - .5); d = Math.max(1, d + rnd() - .5); }
    else { u = d = .5 + Math.max(0, 1.3 - (x - 90) / 110) * (.5 + .5 * rnd()); }
    up.push(`${x} ${(cy - u).toFixed(1)}`);
    dn.unshift(`${x} ${(cy + d).toFixed(1)}`);
  }
  return `<path d="M${up.join('L')}L${dn.join('L')}z" fill="#2d2020"/>`;
}
let w = '<rect width="360" height="69" fill="#666"/><path d="M192 0C250 0 292 69 360 69V0z" fill="#565656"/>';
for (let q = 1; q < 16; q++) w += `<rect x="${Math.round(q * 22.5)}" width="1" height="69" fill="#000" fill-opacity=".12"/>`;
$('wave').innerHTML = w + channel(17.5) + channel(51.5);

// EQ analyser
const P = [[0,200],[55,194],[74,190],[100,182],[130,165],[150,145],[165,125],[190,105],[210,78],[222,63],[235,57],[250,60],[262,66],[275,62],[285,61],[295,68],[305,90],[312,120],[320,155],[328,178],[336,196],[345,180],[352,172],[375,167],[385,155],[392,135],[400,120],[408,135],[414,160],[420,156],[428,163],[436,157],[442,172],[448,165],[455,195],[465,205],[475,245],[485,178],[495,215],[505,235],[512,262],[520,225],[530,215],[540,235],[555,228],[565,245],[585,228],[597,257],[605,205],[615,215],[630,187],[640,215],[655,230],[665,225],[675,200],[685,160],[690,170],[697,135],[705,160],[712,185],[720,172],[727,155],[735,200],[745,190],[752,185],[762,195],[770,225],[785,235],[800,225],[815,250],[830,255],[845,265],[860,245],[875,262],[895,250],[910,250],[930,265],[950,280],[970,270],[985,300],[1000,290],[1015,315],[1030,310],[1045,335],[1060,340],[1080,345],[1095,375],[1110,402]];
let d = 'M0 134';
for (let i = 0; i < P.length - 1; i++) {
  const [x0, y0] = P[i], [x1, y1] = P[i + 1];
  const n = x0 < 435 ? 1 : Math.max(1, Math.round((x1 - x0) / 5));
  for (let j = 0; j < n; j++) {
    const t = j / n, jit = x0 < 435 ? 0 : (rnd() - .5) * 16;
    d += `L${((x0 + (x1 - x0) * t) / 3).toFixed(1)} ${((y0 + (y1 - y0) * t + jit) / 3).toFixed(1)}`;
  }
}
let e = `<path d="${d}L370 134z" fill="#565656"/>`;
[334,391,430,466,493,515,535,551,568,668,725,770,803,827,850,870,887,901,1003,1063,1103,1137,1163,1185,1205,1221,1238,1338].forEach(x => {
  const m = x === 568 || x === 901 || x === 1238;
  e += `<rect x="${Math.round((x - 231) / 3)}" y="0" width="1" height="${m ? 122 : 134}" fill="#fff" fill-opacity="${m ? .2 : .1}"/>`;
});
[['12', 14], ['6', 40], ['0', 67], ['-6', 94], ['-12', 120]].forEach(([t, y]) => {
  e += `<rect x="23" y="${y}" width="351" height="1" fill="#fff" fill-opacity=".1"/><text x="19" y="${y + 3.500}" text-anchor="end">${t}</text>`;
});
[['100', 112], ['1k', 223], ['10k', 335]].forEach(([t, x]) => { e += `<text x="${x}" y="132" text-anchor="middle">${t}</text>`; });
e += '<rect y="66" width="374" height="2" fill="#1cc3d8"/>';
[58, 147, 222, 298].forEach((x, i) => {
  const s = i === 2;
  e += `<circle cx="${x}" cy="67" r="5.500" fill="${s ? '#ffb700' : 'none'}" stroke="#ffb700" stroke-width="1.500"/><text x="${x}" y="70" text-anchor="middle" style="font-size:9px;fill:${s ? '#222' : '#ffb700'}">${i + 1}</text>`;
});
$('eqgraph').innerHTML = e;

// Limiter meters
let m = '';
[22, 37].forEach(x => { m += `<rect x="${x}" y="1" width="14" height="121" fill="#3a3a3a"/><rect x="${x}" y="5" width="14" height="117" fill="#18b44c"/><rect x="${x}" y="4" width="14" height="1" fill="#2df06c"/><rect x="${x}" y="97" width="14" height="25" fill="#00f458"/>`; });
[99, 114].forEach(x => { m += `<rect x="${x}" y="1" width="14" height="121" fill="#393939"/><rect x="${x}" y="1" width="14" height="5" fill="#ffa31c"/>`; });
m += '<path d="M52 5l10-5v10z" fill="#00eaff"/>';
[[1, 6], [13, 3], [24, 3], [34, 6], [44, 3], [53, 3], [62, 6], [99, 6], [117, 4]].forEach(([y, l]) => {
  m += `<rect x="53" y="${y}" width="${y === 1 ? 0 : l}" height="1" fill="#777"/><rect x="${97 - l}" y="${y}" width="${l}" height="1" fill="#777"/>`;
});
[['0', 8], ['3', 38], ['6', 66], ['12', 102], ['24', 121]].forEach(([t, y]) => { m += `<text x="75" y="${y}">${t}</text>`; });
$('limg').innerHTML = m;
```
